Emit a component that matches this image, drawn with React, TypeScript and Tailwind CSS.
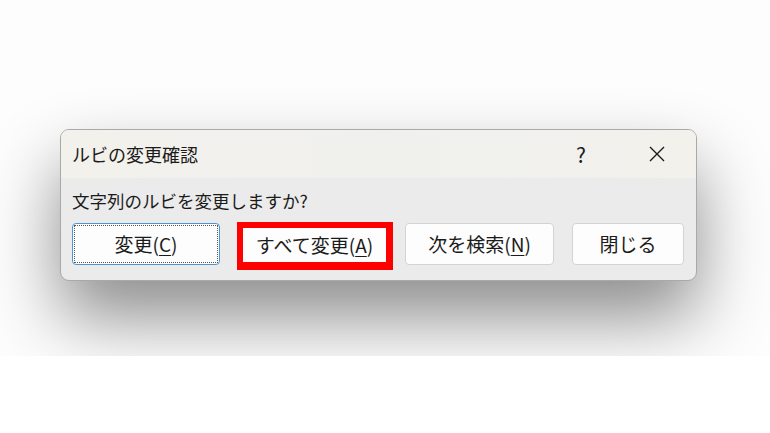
import React from "react";

const font = { fontFamily: '"Noto Sans CJK JP", "Noto Sans", sans-serif' };

function Btn({
  children,
  w,
  className = "",
}: {
  children: React.ReactNode;
  w: string;
  className?: string;
}) {
  return (
    <div
      className={`${w} h-[42px] flex items-center justify-center bg-[#fdfdfd] border border-[#d3d3d3] rounded-[4px] text-[19px] text-[#1b1b1b] ${className}`}
    >
      {children}
    </div>
  );
}

export default function App() {
  return (
    <div style={font} className="w-[770px] h-[433px] bg-white">
      <div className="w-[770px] h-[356px] bg-[#fdfdfd] overflow-hidden pt-[129px] pl-[60px]">
        <div className="w-[637px] h-[152px] rounded-[9px] border border-[#a9a9a9] bg-[#ebebeb] shadow-[0_36px_70px_rgba(0,0,0,0.45)] overflow-hidden flex flex-col">
          <div className="h-[48px] shrink-0 flex items-center pl-[11px] bg-gradient-to-r from-[#f3f1ec] via-[#f0f0ed] to-[#f2f1ec] text-[18px] text-[#1b1b1b]">
            <span>ルビの変更確認</span>
            <span className="ml-auto w-[20px] text-center text-[21px] leading-none">?</span>
            <svg
              className="ml-[58px] mr-[31px]"
              width="16"
              height="16"
              viewBox="0 0 16 16"
            >
              <path d="M1 1 L15 15 M15 1 L1 15" stroke="#1b1b1b" strokeWidth="1.4" />
            </svg>
          </div>
          <div className="flex-1 flex flex-col pl-[11px] pt-[11px]">
            <div className="h-[24px] leading-[24px] text-[17.5px] text-[#1b1b1b]">
              文字列のルビを変更しますか?
            </div>
            <div className="flex items-start mt-[10px]">
              <div className="w-[148px] h-[42px] rounded-[4px] border border-[#4d95db] bg-[#fdfdfd] p-[1px]">
                <div className="w-full h-full border border-dotted border-[#555] flex items-center justify-center text-[19px] text-[#1b1b1b]">
                  変更(<span className="underline underline-offset-[3px]">C</span>)
                </div>
              </div>
              <div className="ml-[17px] -mt-[1px] w-[156px] h-[48px] bg-[#ff0000] pl-[6px] pr-[7px] pt-[6px] pb-[8px]">
                <div className="w-full h-full bg-[#fdfdfd] flex items-center justify-center text-[19px] text-[#1b1b1b]">
                  すべて変更(<span className="underline underline-offset-[3px]">A</span>)
                </div>
              </div>
              <Btn w="w-[149px]" className="ml-[12px]">
                次を検索(<span className="underline underline-offset-[3px]">N</span>)
              </Btn>
              <Btn w="w-[112px]" className="ml-[18px]">
                閉じる
              </Btn>
            </div>
          </div>
        </div>
      </div>
    </div>
  );
}
